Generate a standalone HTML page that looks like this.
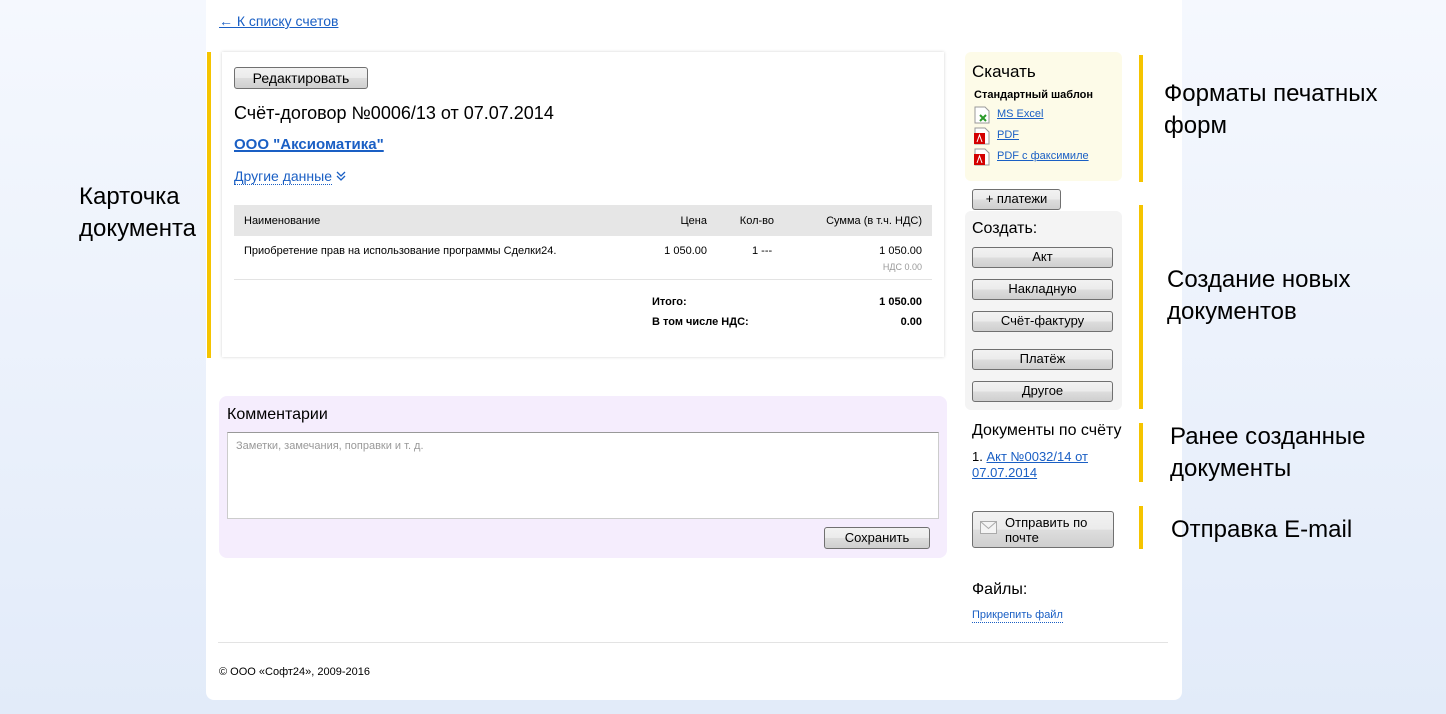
<!DOCTYPE html>
<html><head><meta charset="utf-8"><style>
*{box-sizing:border-box;margin:0;padding:0}
body{width:1446px;height:714px;overflow:hidden;background:linear-gradient(#f5f8fe,#e2ebf9);font-family:"Liberation Sans",sans-serif;position:relative;color:#000}
.a{position:absolute}
.panel{left:206px;top:0;width:976px;height:700px;background:#fff;border-radius:0 0 8px 8px}
a{color:#1a5fc4}
.btn{position:absolute;border:1px solid #707070;border-radius:3px;background:linear-gradient(#f2f2f2 0,#ebebeb 50%,#dddddd 51%,#cfcfcf 100%);font-size:13px;text-align:center;line-height:18px;color:#000}
.yb{position:absolute;width:4px;background:#f5c400}
.lbl{position:absolute;font-size:24px;line-height:32px;color:#000}
.t{font-size:11px}
.r{text-align:right}
</style></head><body>
<div class="a panel"></div>
<a class="a" style="left:219px;top:13px;font-size:14px" href="#">← К списку счетов</a>

<div class="yb" style="left:207px;top:52px;height:306px"></div>
<div class="a" style="left:222px;top:52px;width:722px;height:305px;background:#fff;box-shadow:0 0 3px rgba(0,0,0,.18)"></div>
<div class="btn" style="left:234px;top:67px;width:134px;height:22px;font-size:14px;line-height:20px">Редактировать</div>
<div class="a" style="left:234px;top:103px;font-size:18px">Счёт-договор №0006/13 от 07.07.2014</div>
<a class="a" style="left:234px;top:136px;font-size:15px;font-weight:bold;text-decoration-thickness:2px" href="#">ООО "Аксиоматика"</a>
<div class="a" style="left:234px;top:168px;font-size:14px;color:#1a5fc4;border-bottom:1px dotted #1a5fc4;line-height:16px">Другие данные</div>
<svg class="a" style="left:336px;top:170px" width="10" height="12"><path d="M1 2l4 4 4-4M1 6l4 4 4-4" fill="none" stroke="#1a5fc4" stroke-width="1.3"/></svg>

<div class="a" style="left:234px;top:205px;width:698px;height:31px;background:#e6e6e6"></div>
<div class="a t" style="left:244px;top:215px">Наименование</div>
<div class="a t r" style="left:607px;width:100px;top:215px">Цена</div>
<div class="a t r" style="left:674px;width:100px;top:215px">Кол-во</div>
<div class="a t r" style="left:722px;width:200px;top:215px">Сумма (в т.ч. НДС)</div>
<div class="a t" style="left:244px;top:245px">Приобретение прав на использование программы Сделки24.</div>
<div class="a t r" style="left:607px;width:100px;top:245px">1 050.00</div>
<div class="a t" style="left:752px;top:245px">1 ---</div>
<div class="a t r" style="left:822px;width:100px;top:245px">1 050.00</div>
<div class="a r" style="left:822px;width:100px;top:262px;font-size:9px;color:#999">НДС 0.00</div>
<div class="a" style="left:234px;top:279px;width:698px;height:1px;background:#e3e3e3"></div>
<div class="a t" style="left:652px;top:296px;font-weight:bold">Итого:</div>
<div class="a t r" style="left:822px;width:100px;top:296px;font-weight:bold">1 050.00</div>
<div class="a t" style="left:652px;top:316px;font-weight:bold">В том числе НДС:</div>
<div class="a t r" style="left:822px;width:100px;top:316px;font-weight:bold">0.00</div>

<div class="a" style="left:219px;top:396px;width:728px;height:162px;background:#f5edfd;border-radius:8px"></div>
<div class="a" style="left:227px;top:406px;font-size:16px">Комментарии</div>
<div class="a" style="left:227px;top:432px;width:712px;height:87px;background:#fff;border:1px solid #ccc;border-top-color:#999"></div>
<div class="a" style="left:236px;top:440px;font-size:11px;color:#999">Заметки, замечания, поправки и т. д.</div>
<div class="btn" style="left:824px;top:527px;width:106px;height:22px;line-height:20px">Сохранить</div>

<div class="a" style="left:218px;top:642px;width:950px;height:1px;background:#e3e3e3"></div>
<div class="a" style="left:219px;top:666px;font-size:11px">© ООО «Софт24», 2009-2016</div>

<div class="a" style="left:965px;top:52px;width:157px;height:129px;background:#fdfbe8;border-radius:6px"></div>
<div class="a" style="left:972px;top:62px;font-size:17px">Скачать</div>
<div class="a" style="left:974px;top:89px;font-size:11px;font-weight:bold">Стандартный шаблон</div>
<svg class="a" style="left:974px;top:106px" width="16" height="18"><path d="M1 1h10l4 4v12H1z" fill="#fff" stroke="#999"/><path d="M6 9l6 6M12 9l-6 6" stroke="#2a9a2a" stroke-width="2"/></svg>
<a class="a" style="left:997px;top:108px;font-size:11px" href="#">MS Excel</a>
<svg class="a" style="left:974px;top:127px" width="16" height="18"><path d="M1 1h10l4 4v12H1z" fill="#fff" stroke="#999"/><rect x="0" y="6" width="11" height="11" fill="#d40000"/><path d="M3 15l2.5-7 2.5 7" stroke="#fff" fill="none"/></svg>
<a class="a" style="left:997px;top:129px;font-size:11px" href="#">PDF</a>
<svg class="a" style="left:974px;top:148px" width="16" height="18"><path d="M1 1h10l4 4v12H1z" fill="#fff" stroke="#999"/><rect x="0" y="6" width="11" height="11" fill="#d40000"/><path d="M3 15l2.5-7 2.5 7" stroke="#fff" fill="none"/></svg>
<a class="a" style="left:997px;top:150px;font-size:11px" href="#">PDF с факсимиле</a>

<div class="btn" style="left:972px;top:189px;width:89px;height:21px">+ платежи</div>
<div class="a" style="left:965px;top:211px;width:157px;height:199px;background:#f4f4f4;border-radius:6px"></div>
<div class="a" style="left:972px;top:220px;font-size:16px">Создать:</div>
<div class="btn" style="left:972px;top:247px;width:141px;height:21px">Акт</div>
<div class="btn" style="left:972px;top:279px;width:141px;height:21px">Накладную</div>
<div class="btn" style="left:972px;top:311px;width:141px;height:21px">Счёт-фактуру</div>
<div class="btn" style="left:972px;top:349px;width:141px;height:21px">Платёж</div>
<div class="btn" style="left:972px;top:381px;width:141px;height:21px">Другое</div>

<div class="a" style="left:972px;top:422px;font-size:16px">Документы по счёту</div>
<div class="a" style="left:972px;top:449px;font-size:13px;line-height:16px;width:150px">1. <a href="#">Акт №0032/14 от 07.07.2014</a></div>

<div class="btn" style="left:972px;top:511px;width:142px;height:37px;text-align:left;padding-left:32px;line-height:15px;padding-top:3px">Отправить по почте</div>
<svg class="a" style="left:980px;top:521px" width="17" height="13"><rect x=".5" y=".5" width="16" height="12" fill="#f4f4f4" stroke="#aaa"/><path d="M.5 .5l8 7 8-7" fill="none" stroke="#aaa"/></svg>

<div class="a" style="left:972px;top:581px;font-size:16px">Файлы:</div>
<div class="a" style="left:972px;top:609px;font-size:11px;color:#1a5fc4;border-bottom:1px dotted #1a5fc4;line-height:13px">Прикрепить файл</div>

<div class="lbl" style="left:79px;top:181px">Карточка<br>документа</div>
<div class="yb" style="left:1139px;top:55px;height:127px"></div>
<div class="lbl" style="left:1164px;top:78px">Форматы печатных<br>форм</div>
<div class="yb" style="left:1139px;top:205px;height:204px"></div>
<div class="lbl" style="left:1167px;top:264px">Создание новых<br>документов</div>
<div class="yb" style="left:1139px;top:423px;height:59px"></div>
<div class="lbl" style="left:1170px;top:421px">Ранее созданные<br>документы</div>
<div class="yb" style="left:1139px;top:506px;height:43px"></div>
<div class="lbl" style="left:1171px;top:514px">Отправка E-mail</div>
</body></html>
